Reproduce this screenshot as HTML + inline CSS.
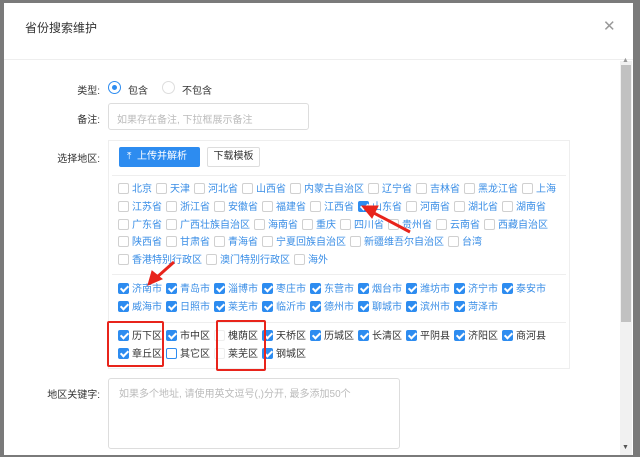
<!DOCTYPE html>
<html><head><meta charset="utf-8"><style>
*{box-sizing:border-box;margin:0;padding:0}
body{width:640px;height:457px;background:#7a7a7a;font-family:"Liberation Sans","Noto Sans CJK SC",sans-serif;font-size:10px;color:#515a6e;position:relative;overflow:hidden}
.dlg{position:absolute;left:4px;top:3px;width:629px;height:452px;background:#fff}
.lbl{position:absolute;text-align:right;width:100px;color:#333;font-size:10px}
.abs{position:absolute}
.row{position:absolute;left:118px;white-space:nowrap;color:#3a8ee6;font-size:10px;line-height:12px}
.row span{display:inline-block;margin-right:4px}
.cb{display:inline-block;width:11px;height:11px;border:1px solid #d0d0d0;border-radius:2px;vertical-align:-2px;margin-right:3px;background:#fff;position:relative}
.ck{background:#2d8cf0;border-color:#2d8cf0}
.ck:after{content:"";position:absolute;left:3px;top:0px;width:3px;height:6px;border:solid #fff;border-width:0 2px 2px 0;transform:rotate(45deg)}
.dv{position:absolute;left:112px;width:454px;height:1px;background:#eee}
.rb{position:absolute;border:2px solid #e8241b;border-radius:2px}
</style></head><body>
<div class="dlg"></div>
<div class="abs" style="left:4px;top:3px;width:629px;height:57px;border-bottom:1px solid #eee;background:#fff"></div>
<div class="abs" style="left:25px;top:19px;font-size:12px;color:#333">省份搜索维护</div>
<div class="abs" style="left:603px;top:17px;font-size:15px;color:#999">✕</div>
<div class="abs" style="left:620px;top:61px;width:12px;height:394px;background:#f1f1f1"></div>
<div class="abs" style="left:621px;top:65px;width:10px;height:257px;background:#c1c1c1"></div>
<div class="abs" style="left:622px;top:57px;font-size:7px;color:#999">▲</div>
<div class="abs" style="left:622px;top:444px;font-size:7px;color:#555">▼</div>

<div class="lbl" style="left:0;top:82px">类型:</div>
<div class="abs" style="left:108px;top:81px;width:13px;height:13px;border:1px solid #2d8cf0;border-radius:50%"><div style="position:absolute;left:3px;top:3px;width:5px;height:5px;border-radius:50%;background:#2d8cf0"></div></div>
<div class="abs" style="left:128px;top:82px;color:#333">包含</div>
<div class="abs" style="left:162px;top:81px;width:13px;height:13px;border:1px solid #ddd;border-radius:50%"></div>
<div class="abs" style="left:182px;top:82px;color:#333">不包含</div>

<div class="lbl" style="left:0;top:111px">备注:</div>
<div class="abs" style="left:108px;top:103px;width:201px;height:27px;border:1px solid #ddd;border-radius:3px;color:#bbb;padding:7px 8px;font-size:10px">如果存在备注, 下拉框展示备注</div>

<div class="lbl" style="left:0;top:150px">选择地区:</div>
<div class="abs" style="left:108px;top:140px;width:462px;height:229px;border:1px solid #eee"></div>
<div class="abs" style="left:119px;top:147px;width:81px;height:20px;background:#2d8cf0;border-radius:2px;color:#fff;font-size:10px;line-height:20px;padding-left:8px">⤒ &nbsp;上传并解析</div>
<div class="abs" style="left:207px;top:147px;width:53px;height:20px;border:1px solid #ddd;border-radius:2px;color:#333;line-height:18px;text-align:center">下载模板</div>
<div class="dv" style="top:175px"></div>

<div class="row" style="top:183px"><span><i class="cb"></i>北京</span><span><i class="cb"></i>天津</span><span><i class="cb"></i>河北省</span><span><i class="cb"></i>山西省</span><span><i class="cb"></i>内蒙古自治区</span><span><i class="cb"></i>辽宁省</span><span><i class="cb"></i>吉林省</span><span><i class="cb"></i>黑龙江省</span><span><i class="cb"></i>上海</span></div>
<div class="row" style="top:201px"><span><i class="cb"></i>江苏省</span><span><i class="cb"></i>浙江省</span><span><i class="cb"></i>安徽省</span><span><i class="cb"></i>福建省</span><span><i class="cb"></i>江西省</span><span><i class="cb ck"></i>山东省</span><span><i class="cb"></i>河南省</span><span><i class="cb"></i>湖北省</span><span><i class="cb"></i>湖南省</span></div>
<div class="row" style="top:219px"><span><i class="cb"></i>广东省</span><span><i class="cb"></i>广西壮族自治区</span><span><i class="cb"></i>海南省</span><span><i class="cb"></i>重庆</span><span><i class="cb"></i>四川省</span><span><i class="cb"></i>贵州省</span><span><i class="cb"></i>云南省</span><span><i class="cb"></i>西藏自治区</span></div>
<div class="row" style="top:236px"><span><i class="cb"></i>陕西省</span><span><i class="cb"></i>甘肃省</span><span><i class="cb"></i>青海省</span><span><i class="cb"></i>宁夏回族自治区</span><span><i class="cb"></i>新疆维吾尔自治区</span><span><i class="cb"></i>台湾</span></div>
<div class="row" style="top:254px"><span><i class="cb"></i>香港特别行政区</span><span><i class="cb"></i>澳门特别行政区</span><span><i class="cb"></i>海外</span></div>
<div class="dv" style="top:274px"></div>
<div class="row" style="top:283px"><span><i class="cb ck"></i>济南市</span><span><i class="cb ck"></i>青岛市</span><span><i class="cb ck"></i>淄博市</span><span><i class="cb ck"></i>枣庄市</span><span><i class="cb ck"></i>东营市</span><span><i class="cb ck"></i>烟台市</span><span><i class="cb ck"></i>潍坊市</span><span><i class="cb ck"></i>济宁市</span><span><i class="cb ck"></i>泰安市</span></div>
<div class="row" style="top:301px"><span><i class="cb ck"></i>威海市</span><span><i class="cb ck"></i>日照市</span><span><i class="cb ck"></i>莱芜市</span><span><i class="cb ck"></i>临沂市</span><span><i class="cb ck"></i>德州市</span><span><i class="cb ck"></i>聊城市</span><span><i class="cb ck"></i>滨州市</span><span><i class="cb ck"></i>菏泽市</span></div>
<div class="dv" style="top:322px"></div>
<div class="row" style="top:330px;color:#333"><span><i class="cb ck"></i>历下区</span><span><i class="cb ck"></i>市中区</span><span><i class="cb" style="border-color:#eee"></i>槐荫区</span><span><i class="cb ck"></i>天桥区</span><span><i class="cb ck"></i>历城区</span><span><i class="cb ck"></i>长清区</span><span><i class="cb ck"></i>平阴县</span><span><i class="cb ck"></i>济阳区</span><span><i class="cb ck"></i>商河县</span></div>
<div class="row" style="top:348px;color:#333"><span><i class="cb ck"></i>章丘区</span><span><i class="cb" style="border-color:#2d8cf0"></i>其它区</span><span><i class="cb" style="border-color:#eee"></i>莱芜区</span><span><i class="cb ck"></i>钢城区</span></div>

<div class="rb" style="left:107px;top:321px;width:57px;height:46px"></div>
<div class="rb" style="left:216px;top:320px;width:50px;height:51px"></div>

<div class="lbl" style="left:0;top:386px">地区关键字:</div>
<div class="abs" style="left:108px;top:378px;width:292px;height:71px;border:1px solid #ddd;border-radius:3px;color:#bbb;padding:6px 10px">如果多个地址, 请使用英文逗号(,)分开, 最多添加50个</div>

<svg class="abs" style="left:0;top:0" width="640" height="457">
<g fill="#e8241b" stroke="#e8241b">
<line x1="410" y1="232" x2="372" y2="212" stroke-width="3"/>
<polygon points="362,206 378,206 372,218" stroke-width="1"/>
<line x1="174" y1="262" x2="156" y2="278" stroke-width="3"/>
<polygon points="148,285 152,271 162,279" stroke-width="1"/>
</g></svg>
</body></html>
